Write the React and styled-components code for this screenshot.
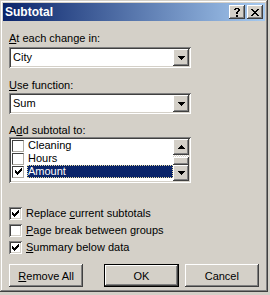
import React from "react";
import styled, { createGlobalStyle } from "styled-components";

const FACE = "#d4d0c8";

const Global = createGlobalStyle`
  html, body { margin: 0; padding: 0; background: ${FACE}; }
  body { font-family: "Liberation Sans", Arial, sans-serif; font-size: 11px; color: #000; }
`;

const PixSvg = styled.svg`
  display: block;
`;

const Pix = ({ rows, color = "#000" }) => {
  const w = rows[0].length;
  const h = rows.length;
  const rects = [];
  rows.forEach((r, y) => {
    for (let x = 0; x < r.length; x++) {
      if (r[x] === "X") rects.push(<rect key={`${x}-${y}`} x={x} y={y} width={1} height={1} />);
    }
  });
  return (
    <PixSvg width={w} height={h} viewBox={`0 0 ${w} ${h}`} fill={color} shapeRendering="crispEdges">
      {rects}
    </PixSvg>
  );
};

const ARROW_DOWN = ["XXXXXXX", ".XXXXX.", "..XXX..", "...X..."];
const ARROW_UP = ["...X...", "..XXX..", ".XXXXX.", "XXXXXXX"];
const CLOSE = [
  "XX....XX",
  ".XX..XX.",
  "..XXXX..",
  "...XX...",
  "..XXXX..",
  ".XX..XX.",
  "XX....XX",
];
const HELP = [
  ".XXXX.",
  "XX..XX",
  "....XX",
  "...XX.",
  "..XX..",
  "..XX..",
  "......",
  "..XX..",
  "..XX..",
];
const CHECK = [
  "......X",
  ".....XX",
  "X...XXX",
  "XX.XXX.",
  "XXXXX..",
  ".XXX...",
  "..X....",
];

const raised = `box-shadow: inset -1px -1px #404040, inset 1px 1px #fff, inset -2px -2px #808080, inset 2px 2px ${FACE};`;
const sunken = `box-shadow: inset 1px 1px #808080, inset -1px -1px #fff, inset 2px 2px #404040, inset -2px -2px ${FACE};`;

const Window = styled.div`
  width: 268px;
  height: 292px;
  box-sizing: border-box;
  padding: 3px;
  background: ${FACE};
  box-shadow: inset -1px -1px #404040, inset 1px 1px ${FACE}, inset -2px -2px #808080, inset 2px 2px #fff;
  display: flex;
  flex-direction: column;
`;

const TitleBar = styled.div`
  height: 18px;
  background: linear-gradient(to right, #0a246a, #a6caf0);
  display: flex;
  align-items: center;
  padding: 0 2px 0 2px;
`;

const Title = styled.div`
  flex: 1;
  color: #fff;
  font-weight: bold;
  font-size: 12px;
  line-height: 18px;
`;

const CapButton = styled.div`
  width: 16px;
  height: 14px;
  background: ${FACE};
  ${raised}
  display: flex;
  align-items: center;
  justify-content: center;
  margin-left: ${(p) => p.$ml || 0}px;
`;

const Body = styled.div`
  padding: 0 6px;
  display: flex;
  flex-direction: column;
`;

const Label = styled.div`
  height: 13px;
  line-height: 13px;
  margin-top: ${(p) => p.$mt}px;
  white-space: nowrap;
`;

const Combo = styled.div`
  width: 182px;
  height: 21px;
  box-sizing: border-box;
  padding: 2px;
  background: #fff;
  ${sunken}
  display: flex;
  margin-top: ${(p) => p.$mt}px;
`;

const ComboText = styled.div`
  flex: 1;
  line-height: 17px;
  padding-left: 2px;
`;

const ArrowButton = styled.div`
  width: 16px;
  height: ${(p) => p.$h || 17}px;
  box-sizing: border-box;
  background: ${FACE};
  ${raised}
  display: flex;
  align-items: center;
  justify-content: center;
  flex: none;
`;

const ListBox = styled.div`
  width: 182px;
  height: 46px;
  box-sizing: border-box;
  padding: 2px;
  background: #fff;
  ${sunken}
  display: flex;
`;

const Rows = styled.div`
  flex: 1;
  display: flex;
  flex-direction: column;
  overflow: hidden;
`;

const Row = styled.div`
  height: 13px;
  display: flex;
  align-items: center;
  padding-left: 1px;
`;

const FlatBox = styled.div`
  width: 12px;
  height: 12px;
  box-sizing: border-box;
  background: #fff;
  border-top: 1px solid #404040;
  border-left: 1px solid #404040;
  border-right: 1px solid #b0aca4;
  border-bottom: 1px solid #b0aca4;
  display: flex;
  align-items: center;
  justify-content: center;
  flex: none;
`;

const ItemText = styled.div`
  margin-left: 3px;
  flex: 1;
  height: 13px;
  line-height: 13px;
  padding-left: 1px;
  color: ${(p) => (p.$sel ? "#fff" : "#000")};
  background: ${(p) => (p.$sel ? "#0a246a" : "transparent")};
  outline: ${(p) => (p.$sel ? "1px dotted #e8dca0" : "none")};
  outline-offset: -1px;
`;

const ScrollBar = styled.div`
  width: 16px;
  display: flex;
  flex-direction: column;
  flex: none;
`;

const Track = styled.div`
  flex: 1;
  display: flex;
  flex-direction: column;
  justify-content: flex-end;
  background-image: conic-gradient(${FACE} 25%, #fff 0 50%, ${FACE} 0 75%, #fff 0);
  background-size: 2px 2px;
`;

const Thumb = styled.div`
  height: 8px;
  background: ${FACE};
  ${raised}
`;

const Checks = styled.div`
  margin-top: 24px;
  display: flex;
  flex-direction: column;
  gap: 4px;
`;

const CheckRow = styled.div`
  display: flex;
  align-items: center;
  height: 13px;
`;

const CheckBox = styled.div`
  width: 13px;
  height: 13px;
  box-sizing: border-box;
  background: #fff;
  ${sunken}
  display: flex;
  align-items: center;
  justify-content: center;
  flex: none;
`;

const CheckLabel = styled.div`
  margin-left: 4px;
  line-height: 13px;
  white-space: nowrap;
`;

const Buttons = styled.div`
  margin-top: 10px;
  display: flex;
`;

const Button = styled.div`
  width: 75px;
  height: 23px;
  box-sizing: border-box;
  background: ${FACE};
  display: flex;
  align-items: center;
  justify-content: center;
  margin-left: ${(p) => p.$ml || 0}px;
  ${(p) =>
    p.$default
      ? `box-shadow: inset -1px -1px #000, inset 1px 1px #000, inset -2px -2px #404040, inset 2px 2px #fff, inset -3px -3px #808080, inset 3px 3px ${FACE};`
      : raised}
`;

const Check = ({ checked }) => (
  <CheckBox>{checked && <Pix rows={CHECK} />}</CheckBox>
);

const items = [
  { name: "Cleaning", checked: false },
  { name: "Hours", checked: false },
  { name: "Amount", checked: true, sel: true },
];

export default function App() {
  return (
    <>
      <Global />
      <Window>
        <TitleBar>
          <Title>Subtotal</Title>
          <CapButton>
            <Pix rows={HELP} />
          </CapButton>
          <CapButton $ml={2}>
            <Pix rows={CLOSE} />
          </CapButton>
        </TitleBar>
        <Body>
          <Label $mt={11}>
            <u>A</u>t each change in:
          </Label>
          <Combo $mt={2}>
            <ComboText>City</ComboText>
            <ArrowButton>
              <Pix rows={ARROW_DOWN} />
            </ArrowButton>
          </Combo>
          <Label $mt={11}>
            <u>U</u>se function:
          </Label>
          <Combo $mt={1}>
            <ComboText>Sum</ComboText>
            <ArrowButton>
              <Pix rows={ARROW_DOWN} />
            </ArrowButton>
          </Combo>
          <Label $mt={10}>
            A<u>d</u>d subtotal to:
          </Label>
          <ListBox>
            <Rows>
              {items.map((it) => (
                <Row key={it.name}>
                  <FlatBox>{it.checked && <Pix rows={CHECK} />}</FlatBox>
                  <ItemText $sel={it.sel}>{it.name}</ItemText>
                </Row>
              ))}
            </Rows>
            <ScrollBar>
              <ArrowButton $h={16}>
                <Pix rows={ARROW_UP} />
              </ArrowButton>
              <Track>
                <Thumb />
              </Track>
              <ArrowButton $h={16}>
                <Pix rows={ARROW_DOWN} />
              </ArrowButton>
            </ScrollBar>
          </ListBox>
          <Checks>
            <CheckRow>
              <Check checked />
              <CheckLabel>
                Replace <u>c</u>urrent subtotals
              </CheckLabel>
            </CheckRow>
            <CheckRow>
              <Check />
              <CheckLabel>
                <u>P</u>age break between groups
              </CheckLabel>
            </CheckRow>
            <CheckRow>
              <Check checked />
              <CheckLabel>
                <u>S</u>ummary below data
              </CheckLabel>
            </CheckRow>
          </Checks>
          <Buttons>
            <Button>
              <span>
                <u>R</u>emove All
              </span>
            </Button>
            <Button $ml={21} $default>
              OK
            </Button>
            <Button $ml={6}>Cancel</Button>
          </Buttons>
        </Body>
      </Window>
    </>
  );
}
